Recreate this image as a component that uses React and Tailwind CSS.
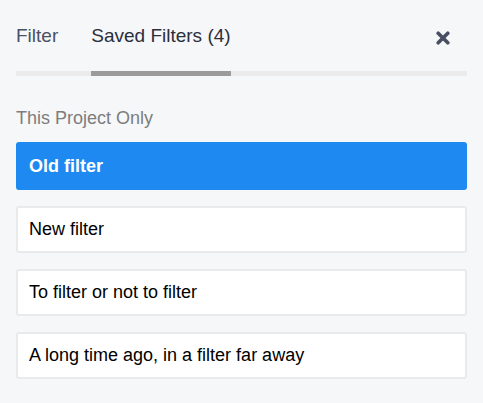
export default function App() {
  const items = ["New filter", "To filter or not to filter", "A long time ago, in a filter far away"];
  return (
    <div className="w-[483px] h-[403px] bg-[#f6f7f9] px-4 pt-[25px]" style={{ fontFamily: '"Liberation Sans", Arial, sans-serif' }}>
      <div className="flex items-start border-b-[5px] border-[#ebebeb]">
        <div className="-mb-[5px] border-b-[5px] border-transparent pb-[24px] text-[19px] leading-[22px] text-[#4a5163]">Filter</div>
        <div className="ml-[33px] -mb-[5px] border-b-[5px] border-[#9b9b9b] pb-[24px] text-[19px] leading-[22px] text-[#2b2f3a]">Saved Filters (4)</div>
        <div className="ml-auto mr-[17px] mt-[6px]">
          <svg width="14" height="14" viewBox="0 0 14 14">
            <path d="M2.2 2.2 L11.8 11.8 M11.8 2.2 L2.2 11.8" stroke="#484f60" strokeWidth="3.6" strokeLinecap="round" />
          </svg>
        </div>
      </div>
      <div className="mt-[31px] text-[18px] leading-[22px] text-[#7d7d7d]">This Project Only</div>
      <div className="mt-[13px] flex flex-col gap-4">
        <div className="h-[48px] rounded-[3px] bg-[#1e8af1] px-[13px] flex items-center text-[18px] font-bold text-white">Old filter</div>
        {items.map((t) => (
          <div key={t} className="h-[47px] rounded-[3px] border-2 border-[#e9eaec] bg-white px-[11px] flex items-center text-[18px] text-black">{t}</div>
        ))}
      </div>
    </div>
  );
}
